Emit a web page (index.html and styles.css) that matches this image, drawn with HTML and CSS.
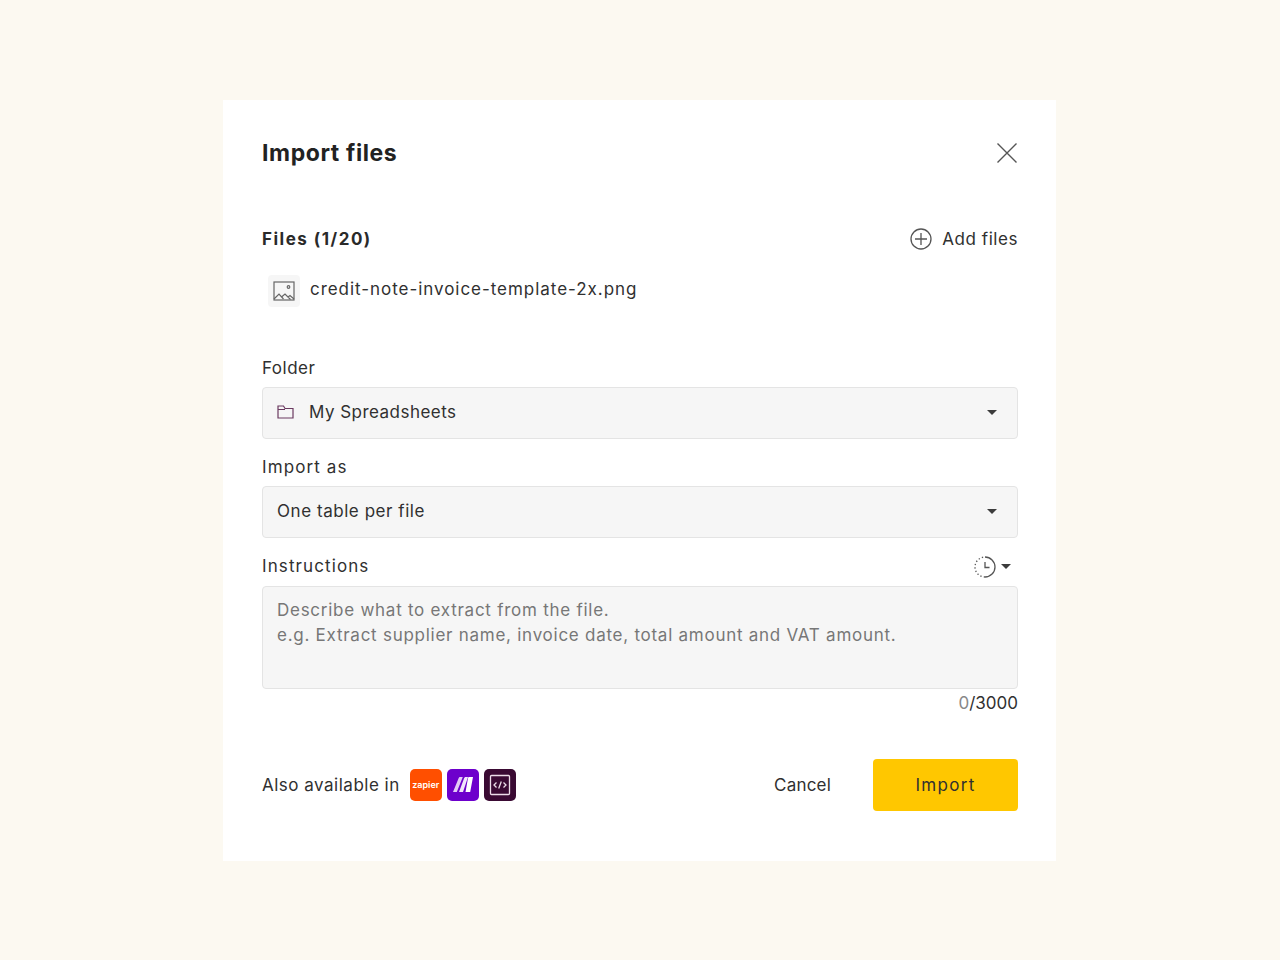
FILE: index.html
```html
<!DOCTYPE html>
<html lang="en">
<head>
    <meta charset="UTF-8">
    <meta name="viewport" content="width=device-width, initial-scale=1.0">
    <title>Import files</title>
    <link rel="stylesheet" href="styles.css">
</head>
<body>
    <div class="dialog">
        <div class="header">
            <h2>Import files</h2>
            <button class="close" aria-label="Close">
                <svg width="22" height="22" viewBox="0 0 22 22" fill="none" stroke="#555" stroke-width="1.4"><path d="M1.5 1.5l19 19M20.5 1.5l-19 19"/></svg>
            </button>
        </div>
        <div class="files-head">
            <span class="files-title">Files (1/20)</span>
            <button class="add-files">
                <svg width="22" height="22" viewBox="0 0 22 22" fill="none" stroke="#555" stroke-width="1.3"><circle cx="11" cy="11" r="10"/><path d="M11 5v12M5 11h12"/></svg>
                Add files
            </button>
        </div>
        <div class="file-row">
            <span class="file-icon">
                <svg width="22" height="20" viewBox="0 0 22 20" fill="none" stroke="#666" stroke-width="1.2"><rect x="1" y="1" width="20" height="18"/><circle cx="15.5" cy="6" r="1.3"/><path d="M1 18l5-5 4.500 5M8.500 16l3.500-3 5.500 5.500M15 16l2-1.500 4 3.500"/></svg>
            </span>
            <span class="file-name">credit-note-invoice-template-2x.png</span>
        </div>

        <label class="label folder-label">Folder</label>
        <div class="select">
            <svg class="folder-icon" width="17" height="14" viewBox="0 0 17 14" fill="none" stroke="#6b3a60" stroke-width="1.2"><path d="M1 13V1h5.5l1.500 2.500h8V13zM1 4.500h7"/></svg>
            <span class="select-name">My Spreadsheets</span>
            <span class="caret"></span>
        </div>

        <label class="label">Import as</label>
        <div class="select">
            <span>One table per file</span>
            <span class="caret"></span>
        </div>

        <div class="label-row">
            <label class="label">Instructions</label>
            <button class="history">
                <svg width="22" height="22" viewBox="0 0 22 22" fill="none" stroke="#555" stroke-width="1.3"><path d="M11 1a10 10 0 0 1 0 20"/><path d="M11 21a10 10 0 0 1 0-20" stroke-dasharray="1.3 2.2"/><path d="M11 6v5.500h4.500"/></svg>
                <span class="caret"></span>
            </button>
        </div>
        <div class="textarea">Describe what to extract from the file.<br>e.g. Extract supplier name, invoice date, total amount and VAT amount.</div>
        <div class="counter"><span>0</span>/3000</div>

        <div class="footer">
            <span class="also">Also available in</span>
            <div class="apps">
                <span class="app zapier">zapier</span>
                <span class="app make">
                    <svg width="20" height="15" viewBox="0 0 20 15" fill="#fff"><path d="M0 15L5.500 1.500C5.800.6 6.300 0 7 0h2.800L3.800 15z" opacity=".8"/><path d="M6 15L11 1.500C11.300.6 11.800 0 12.500 0h2.500L10 15z" opacity=".9"/><path d="M12.500 15L15 1c.1-.6.500-1 1.200-1H20l-2.800 15z"/></svg>
                </span>
                <span class="app api">
                    <svg width="22" height="22" viewBox="0 0 22 22" fill="none" stroke="#ecdde8" stroke-width="1.3"><rect x="1.500" y="1.500" width="19" height="19" rx="1"/><path d="M7.500 8.500L5 11l2.500 2.500M14.500 8.500L17 11l-2.500 2.500M12.300 7.500l-2.600 7"/></svg>
                </span>
            </div>
            <button class="cancel">Cancel</button>
            <button class="import">Import</button>
        </div>
    </div>
</body>
</html>
```

FILE: styles.css
```css
* {
    box-sizing: border-box;
}
body {
    margin: 0;
    height: 100vh;
    display: flex;
    justify-content: center;
    align-items: center;
    background-color: #fcf9f1;
    font-family: Inter, "Liberation Sans", sans-serif;
    font-size: 17px;
    letter-spacing: .55px;
    color: #303030;
}
button {
    font: inherit;
    letter-spacing: inherit;
    color: inherit;
    background: none;
    border: 0;
    padding: 0;
    cursor: pointer;
}
.dialog {
    width: 833px;
    height: 761px;
    margin-right: 1px;
    padding: 0 38px 0 39px;
    background-color: #fff;
}
.header {
    display: flex;
    justify-content: space-between;
    align-items: center;
    height: 106px;
}
.header h2 {
    margin: 0;
    padding-top: 1px;
    font-size: 23px;
    font-weight: 700;
    letter-spacing: .6px;
    color: #222;
}
.close {
    display: flex;
}
.files-head {
    display: flex;
    justify-content: space-between;
    align-items: center;
    margin-top: 18px;
    height: 28px;
}
.files-title {
    padding-top: 3px;
    font-weight: 700;
    letter-spacing: 1.5px;
    color: #2a2a2a;
}
.add-files {
    display: flex;
    align-items: center;
    gap: 10px;
    padding-top: 2px;
}
.file-row {
    display: flex;
    align-items: center;
    gap: 10px;
    margin: 23px 0 0 6px;
    height: 32px;
}
.file-icon {
    display: flex;
    justify-content: center;
    align-items: center;
    width: 32px;
    height: 32px;
    border-radius: 4px;
    background-color: #f6f6f6;
}
.file-name {
    margin-bottom: 3px;
    letter-spacing: .96px;
}
.label {
    display: block;
    height: 33px;
    line-height: 28px;
    letter-spacing: 1.1px;
}
.folder-label {
    margin-top: 47px;
    letter-spacing: .5px;
}
.label-row {
    display: flex;
    justify-content: space-between;
}
.select {
    display: flex;
    align-items: center;
    height: 52px;
    padding: 0 20px 2px 14px;
    margin-bottom: 14px;
    border: 1px solid #e4e4e4;
    border-radius: 4px;
    background-color: #f6f6f6;
}
.select-name {
    letter-spacing: .47px;
}
.folder-icon {
    margin: 1px 15px 0 0;
}
.select .caret {
    margin: 2px 0 0 auto;
}
.caret {
    width: 0;
    height: 0;
    border-left: 5px solid transparent;
    border-right: 5px solid transparent;
    border-top: 5px solid #3c3c3c;
}
.history {
    display: flex;
    align-items: center;
    gap: 5px;
    margin-right: 7px;
    height: 28px;
    padding-top: 2px;
}
.textarea {
    height: 103px;
    margin-top: 1px;
    padding: 11px 14px;
    line-height: 25px;
    letter-spacing: .74px;
    border: 1px solid #e4e4e4;
    border-radius: 4px;
    background-color: #f6f6f6;
    color: #777;
}
.counter {
    margin-top: 2px;
    text-align: right;
    line-height: 24px;
    letter-spacing: 0;
}
.counter span {
    color: #888;
}
.footer {
    display: flex;
    align-items: center;
    margin-top: 44px;
}
.also {
    margin-right: 10px;
    letter-spacing: .5px;
}
.apps {
    display: flex;
    gap: 5px;
}
.app {
    display: flex;
    justify-content: center;
    align-items: center;
    width: 32px;
    height: 32px;
    border-radius: 5px;
    color: #fff;
}
.zapier {
    background-color: #ff4f00;
    font-size: 9px;
    font-weight: 600;
    letter-spacing: 0;
}
.make {
    background-color: #6d00cc;
}
.api {
    background-color: #3a0a33;
}
.cancel {
    margin-left: auto;
    margin-right: 42px;
    letter-spacing: .2px;
}
.import {
    width: 145px;
    height: 52px;
    border-radius: 4px;
    letter-spacing: 1.3px;
    background-color: #ffc700;
}
```
